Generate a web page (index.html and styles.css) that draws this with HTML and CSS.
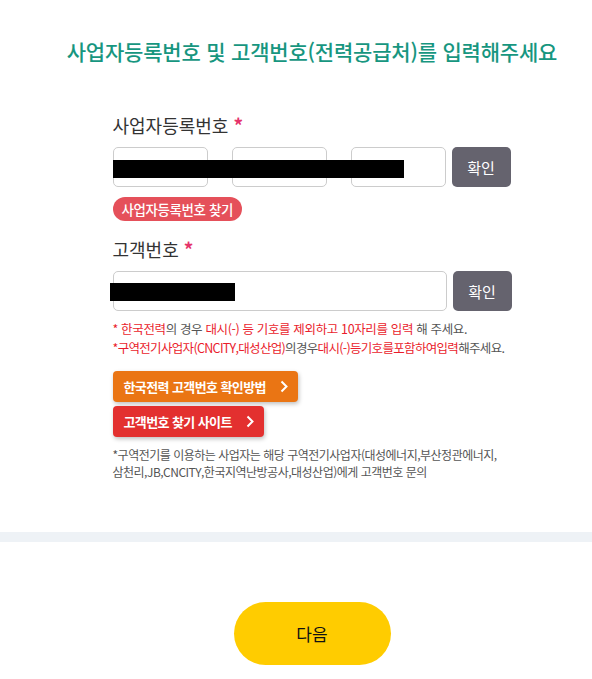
FILE: index.html
```html
<!DOCTYPE html>
<html lang="ko">
<head>
    <meta charset="UTF-8">
    <meta name="viewport" content="width=device-width, initial-scale=1.0">
    <title>사업자등록번호 입력</title>
    <link rel="stylesheet" href="styles.css">
</head>
<body>
    <div id="content">
        <h1 class="title">사업자등록번호 및 고객번호(전력공급처)를 입력해주세요</h1>

        <div class="form">
            <div class="field">
                <label class="label">사업자등록번호<span class="req">*</span></label>
                <div class="row">
                    <input type="text" class="input short">
                    <span class="dash"></span>
                    <input type="text" class="input short">
                    <span class="dash"></span>
                    <input type="text" class="input short">
                    <button class="btn-check">확인</button>
                    <span class="mask mask-biz"></span>
                </div>
                <a class="pill" href="#">사업자등록번호 찾기</a>
            </div>

            <div class="field">
                <label class="label">고객번호<span class="req">*</span></label>
                <div class="row">
                    <input type="text" class="input wide">
                    <button class="btn-check">확인</button>
                    <span class="mask mask-cust"></span>
                </div>
                <p class="note first">
                    <span class="red">* 한국전력</span>의 경우 <span class="red">대시(-) 등 기호를 제외하고 10자리를 입력</span> 해 주세요.
                </p>
                <p class="note tight">
                    <span class="red">*구역전기사업자(CNCITY,대성산업)</span>의경우<span class="red">대시(-)등기호를포함하여입력</span>해주세요.
                </p>

                <div class="links">
                    <a class="link-btn orange" href="#">한국전력 고객번호 확인방법
                        <svg width="8" height="13" viewBox="0 0 8 13"><polyline points="1.5,1.5 6.5,6.5 1.5,11.5" fill="none" stroke="#fff" stroke-width="2"/></svg>
                    </a>
                    <a class="link-btn red-btn" href="#">고객번호 찾기 사이트
                        <svg width="8" height="13" viewBox="0 0 8 13"><polyline points="1.5,1.5 6.5,6.5 1.5,11.5" fill="none" stroke="#fff" stroke-width="2"/></svg>
                    </a>
                </div>

                <p class="footnote">*구역전기를 이용하는 사업자는 해당 구역전기사업자(대성에너지,부산정관에너지,<br>삼천리,JB,CNCITY,한국지역난방공사,대성산업)에게 고객번호 문의</p>
            </div>
        </div>
    </div>

    <div class="divider"></div>

    <div class="actions">
        <button class="btn-next">다음</button>
    </div>
</body>
</html>
```

FILE: styles.css
```css
body {
    margin: 0;
    font-family: "Noto Sans CJK KR", "Noto Sans", sans-serif;
    color: #333;
    background-color: #fff;
}
#content {
    padding: 36px 0 0 32px;
    height: 532px;
    box-sizing: border-box;
}
.title {
    margin: 0;
    text-align: center;
    font-size: 21px;
    font-weight: 500;
    line-height: 30px;
    color: #17967f;
    letter-spacing: -0.2px;
}
.form {
    width: 399px;
    margin: 46px auto 0;
}
.field {
    margin-bottom: 15px;
}
.label {
    display: block;
    font-size: 18px;
    line-height: 26px;
    color: #333;
    margin-bottom: 9px;
}
.req {
    margin-left: 5px;
    color: #e5336a;
    font-size: 19px;
    font-weight: 700;
}
.row {
    position: relative;
    display: flex;
    gap: 6px;
    height: 40px;
}
.input {
    height: 40px;
    box-sizing: border-box;
    border: 1px solid #ccc;
    border-radius: 5px;
    padding: 0 10px;
    font-size: 14px;
}
.input.short {
    width: 95px;
}
.input.wide {
    width: 334px;
}
.dash {
    width: 12px;
}
.btn-check {
    width: 59px;
    height: 40px;
    border: none;
    border-radius: 5px;
    background-color: #65636e;
    color: #fff;
    font-family: inherit;
    font-size: 15px;
    cursor: pointer;
}
.mask {
    position: absolute;
    background-color: #000;
    height: 18px;
}
.mask-biz {
    left: 0;
    top: 13px;
    width: 291px;
}
.mask-cust {
    left: -3px;
    top: 12px;
    width: 125px;
}
.pill {
    display: inline-block;
    margin-top: 10px;
    height: 24px;
    line-height: 24px;
    padding: 0 9px;
    border-radius: 12px;
    background-color: #e5505a;
    color: #fff;
    font-size: 13.5px;
    font-weight: 500;
    text-decoration: none;
    letter-spacing: -0.4px;
}
.note {
    margin: 0;
    font-size: 12.5px;
    line-height: 19px;
    color: #555;
    letter-spacing: -0.36px;
}
.note.first {
    margin-top: 8px;
}
.note.tight {
    letter-spacing: -0.68px;
}
.red {
    color: #ea1c2c;
}
.links {
    display: flex;
    flex-direction: column;
    align-items: flex-start;
    gap: 4px;
    margin-top: 14px;
}
.link-btn {
    display: inline-flex;
    align-items: center;
    gap: 14px;
    height: 31px;
    padding: 0 10px 0 11px;
    border-radius: 4px;
    color: #fff;
    font-size: 13px;
    font-weight: 700;
    text-decoration: none;
    letter-spacing: -0.6px;
    box-shadow: 1px 2px 4px rgba(0,0,0,0.25);
}
.link-btn.orange {
    background-color: #ea7514;
}
.link-btn.red-btn {
    background-color: #e3302f;
}
.footnote {
    margin: 9px 0 0;
    font-size: 12px;
    line-height: 17px;
    color: #555;
    letter-spacing: -0.5px;
}
.divider {
    height: 10px;
    background-color: #eef2f6;
}
.actions {
    padding: 60px 0 0 32px;
    text-align: center;
}
.btn-next {
    width: 157px;
    height: 63px;
    border: none;
    border-radius: 32px;
    background-color: #ffcc00;
    color: #111;
    font-family: inherit;
    font-size: 17px;
    cursor: pointer;
}
```
